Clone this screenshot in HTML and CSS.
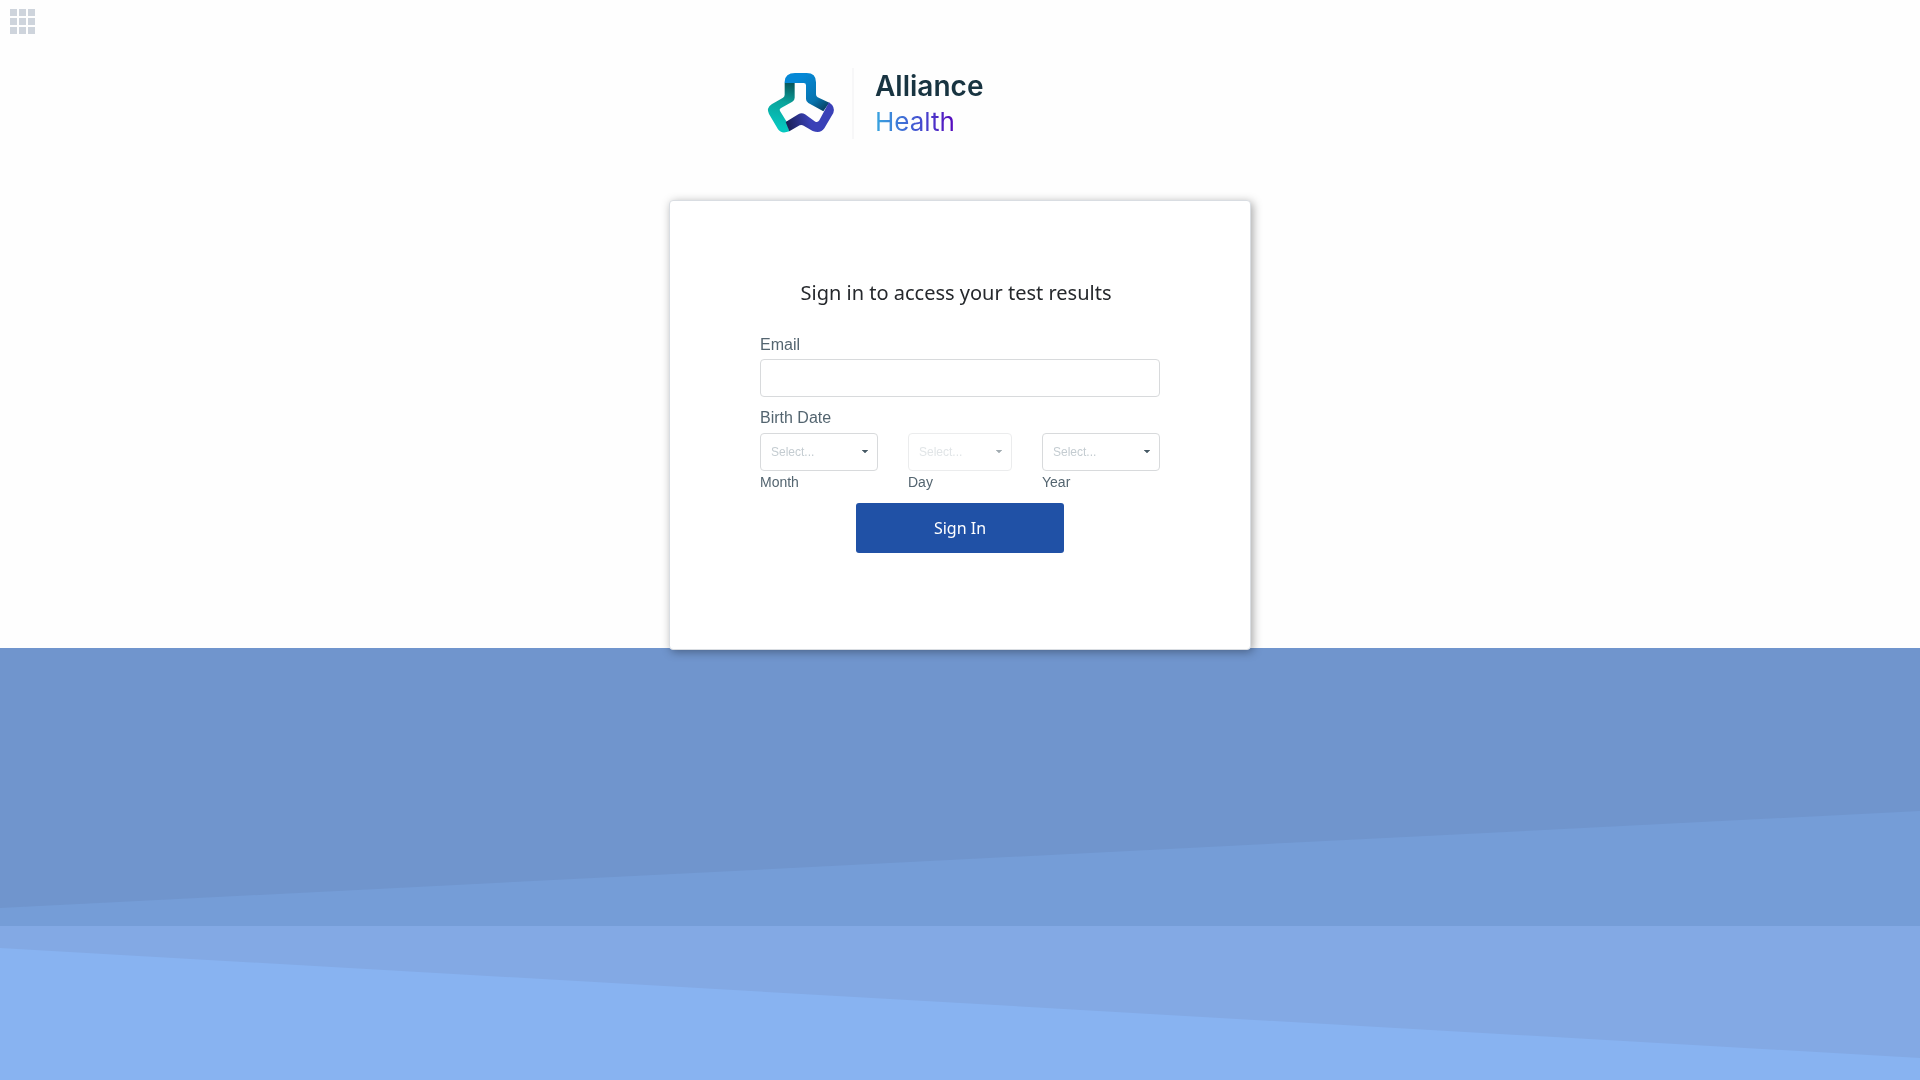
FILE: index.html
```html
<!DOCTYPE html>
<html lang="en">
<head>
<meta charset="utf-8">
<meta name="viewport" content="width=device-width, initial-scale=1">
<title>Alliance Health - Sign in</title>
<link rel="stylesheet" href="styles.css">
</head>
<body>
<svg class="backdrop" viewBox="0 0 1920 432" preserveAspectRatio="none" aria-hidden="true">
  <rect width="1920" height="432" fill="#7095cd"/>
  <path d="M0 260L1920 163V278H0Z" fill="#759dd7"/>
  <path d="M0 278H1920V432H0Z" fill="#83a9e4"/>
  <path d="M0 300L1920 410V432H0Z" fill="#88b3f1"/>
</svg>
<button class="apps" type="button" aria-label="Applications">
  <svg width="27" height="27" viewBox="0 0 27 27" fill="#ced4dc">
    <path d="M1 1h7v7H1zM10 1h7v7h-7zM19 1h7v7h-7zM1 10h7v7H1zM10 10h7v7h-7zM19 10h7v7h-7zM1 19h7v7H1zM10 19h7v7h-7zM19 19h7v7h-7z"/>
  </svg>
</button>
<main class="page">
  <header class="brand">
    <svg class="mark" width="80" height="75" viewBox="0 0 240 225" aria-hidden="true">
      <defs>
        <linearGradient id="teal" gradientUnits="userSpaceOnUse" x1="95" y1="50" x2="60" y2="190">
          <stop offset="0" stop-color="#064f55"/><stop offset=".45" stop-color="#0ba39b"/><stop offset="1" stop-color="#06c8c0"/>
        </linearGradient>
        <linearGradient id="blue" gradientUnits="userSpaceOnUse" x1="120" y1="40" x2="205" y2="140">
          <stop offset="0" stop-color="#0588d6"/><stop offset=".6" stop-color="#0773ad"/><stop offset="1" stop-color="#07344f"/>
        </linearGradient>
        <linearGradient id="purple" gradientUnits="userSpaceOnUse" x1="75" y1="185" x2="150" y2="165">
          <stop offset="0" stop-color="#171c4c"/><stop offset="1" stop-color="#3a41b7"/>
        </linearGradient>
      </defs>
      <path d="M74 53H104V98Q104 106 97 110L62 130Q57 133 60 138L80 170L88 199Q64 208 54 193L27 147Q18 129 35 118L69 98Q74 95 74 89Z" fill="url(#teal)"/>
      <path d="M74 54V50Q75 24 105 24H140Q168 24 168 52V88Q168 94 173 97L208 113L190 139L145 114Q138 110 138 102V61Q138 54 131 54Z" fill="url(#blue)"/>
      <path d="M77 171L115 148Q125 142 135 148L166 170Q173 174 178 166L207 112Q227 126 220 144L193 190Q182 207 158 198L131 182Q125 178 119 181L88 199Z" fill="url(#purple)"/>
    </svg>
    <span class="divider"></span>
    <h1 class="name"><span class="alliance">Alliance</span><span class="health">Health</span></h1>
  </header>
  <form class="card">
    <h2 class="title">Sign in to access your test results</h2>
    <label class="label" for="email">Email</label>
    <input class="control" id="email" type="email">
    <fieldset class="birth">
      <legend class="label">Birth Date</legend>
      <div class="dates">
        <div class="date">
          <select class="control select" id="month"><option>Select...</option></select>
          <label for="month">Month</label>
        </div>
        <div class="date day">
          <select class="control select" id="day" disabled><option>Select...</option></select>
          <label for="day">Day</label>
        </div>
        <div class="date">
          <select class="control select" id="year"><option>Select...</option></select>
          <label for="year">Year</label>
        </div>
      </div>
    </fieldset>
    <button class="submit" type="submit">Sign In</button>
  </form>
</main>
</body>
</html>
```

FILE: styles.css
```css
* { box-sizing: border-box; }
body {
  margin: 0;
  min-height: 100vh;
  background: #fefefe;
  color: #546570;
  font-family: "Liberation Sans", Arial, sans-serif;
}
.backdrop {
  position: fixed;
  left: 0;
  bottom: 0;
  width: 100%;
  height: 40%;
  z-index: -1;
}
.apps {
  position: absolute;
  top: 8px;
  left: 9px;
  padding: 0;
  border: 0;
  background: none;
}
.apps svg { display: block; }
.page {
  width: 100%;
  max-width: 582px;
  margin: 0 auto;
  padding-top: 65px;
}
.brand {
  display: flex;
  height: 135px;
  padding-left: 91px;
}
.divider {
  width: 2px;
  height: 71px;
  margin: 3px 21px 0 12px;
  background: #f7f7f8;
}
.name {
  margin: 4px 0 0;
  display: flex;
  flex-direction: column;
  align-items: flex-start;
  font-family: Inter, sans-serif;
  line-height: 35px;
}
.alliance { font-size: 28px; font-weight: 600; color: #183441; }
.health {
  font-size: 26px;
  font-weight: 400;
  color: transparent;
  background: linear-gradient(90deg, #38a6df, #4258d2 50%, #5707bd);
  background-clip: text;
  -webkit-background-clip: text;
}
.card {
  display: flex;
  flex-direction: column;
  min-height: 450px;
  padding: 76px 90px 40px;
  border: 1px solid #d9dde2;
  border-radius: 4px;
  background: #fff;
  box-shadow: 2px 2px 10px rgba(0, 0, 0, .35);
}
.title {
  margin: 0 8px 26px 0;
  color: #25282c;
  font: 400 20px/32px "Noto Sans", sans-serif;
  text-align: center;
}
.label {
  padding: 0;
  font-size: 16px;
  line-height: 20px;
}
.control {
  width: 100%;
  height: 38px;
  margin: 4px 0 0;
  padding: 0 10px;
  border: 1px solid #d8dadc;
  border-radius: 4px;
  background: #fff;
  font: 12px/16px "Liberation Sans", Arial, sans-serif;
}
.birth {
  min-width: 0;
  margin: 11px 0 0;
  padding: 0;
  border: 0;
}
.dates { display: flex; gap: 30px; padding-top: 1px; }
.date { flex: 118; min-width: 0; font-size: 14px; line-height: 16px; }
.day { flex: 104; }
.date label { display: block; margin-top: 3px; }
.select {
  display: block;
  appearance: none;
  color: #c4ccd1;
  background: #fff url("data:image/svg+xml,%3Csvg xmlns='http://www.w3.org/2000/svg' width='8' height='4'%3E%3Cpath d='M1 0h6L4 3z' fill='%23475a65' stroke='%23475a65' stroke-width='.5'/%3E%3C/svg%3E") no-repeat right 8px center;
}
.select:disabled { opacity: .5; }
.submit {
  align-self: center;
  width: 208px;
  height: 50px;
  margin-top: 13px;
  padding: 0;
  border: 0;
  border-radius: 3px;
  background: #2051a6;
  color: #fff;
  font: 16px/24px "Noto Sans", sans-serif;
}
```
